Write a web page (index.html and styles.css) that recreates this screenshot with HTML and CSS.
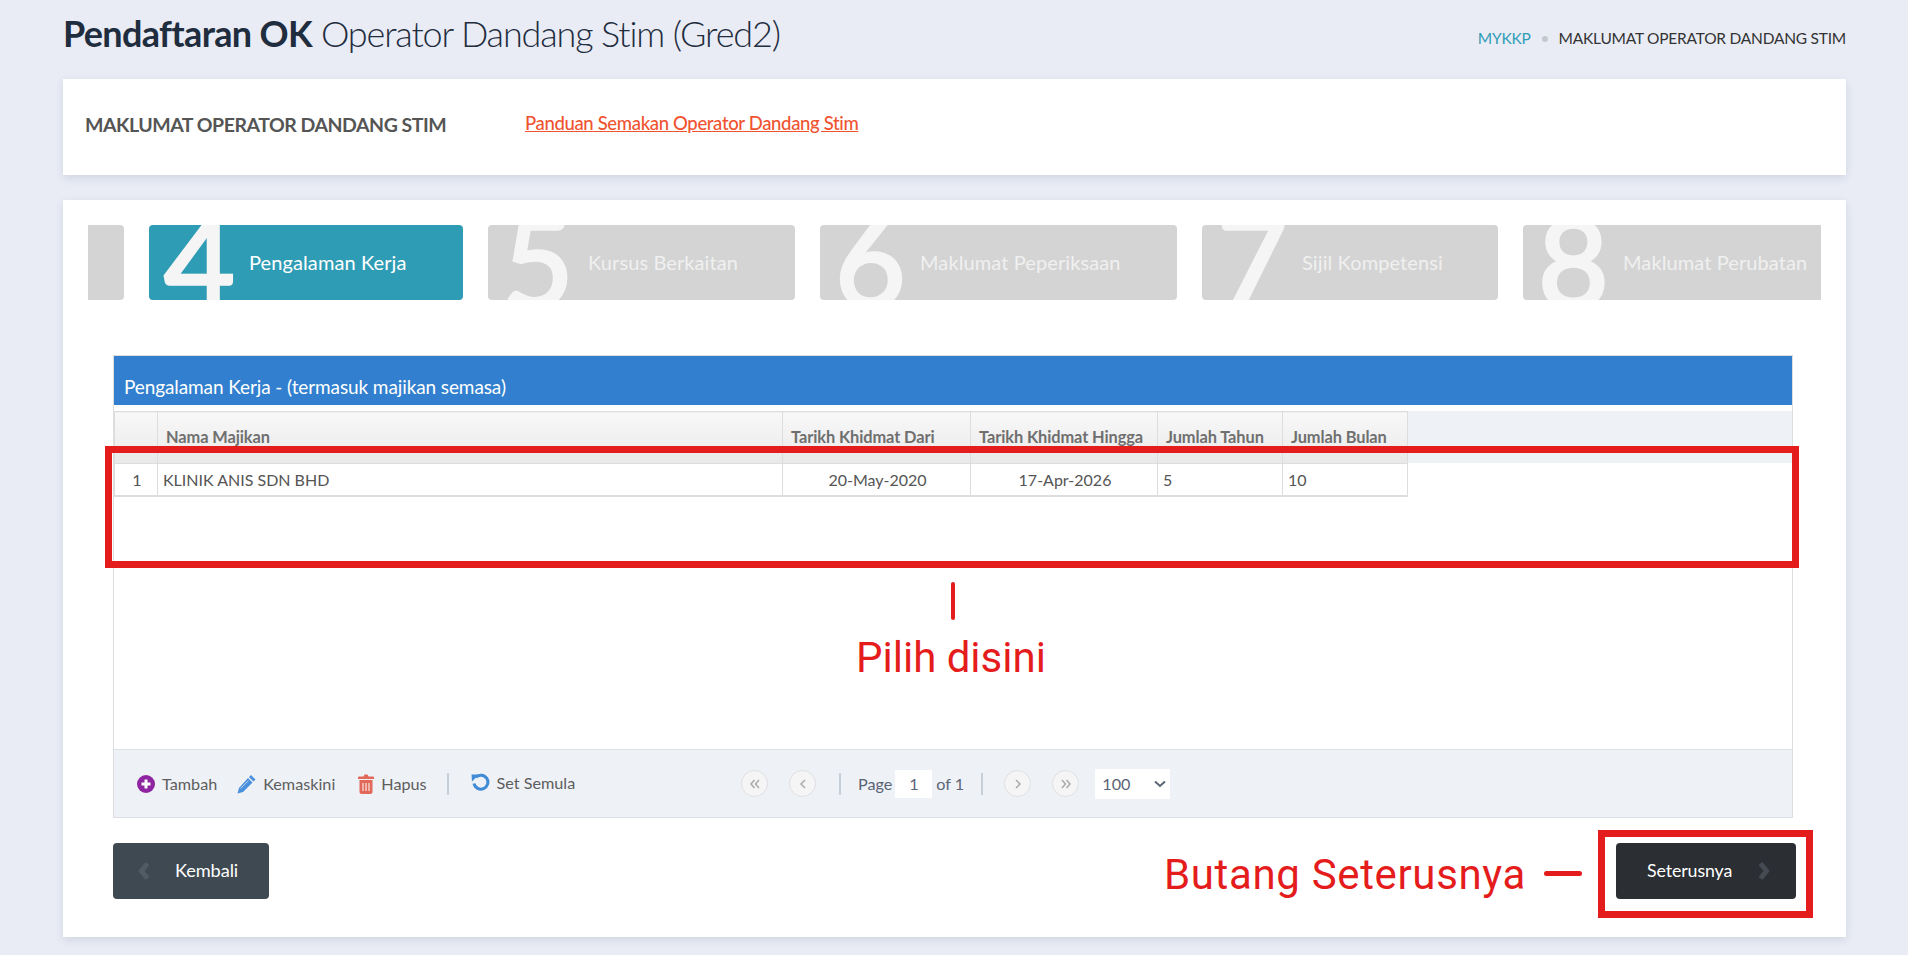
FILE: index.html
```html
<!DOCTYPE html>
<html lang="ms">
<head>
<meta charset="utf-8">
<title>Pendaftaran OK</title>
<link rel="stylesheet" href="styles.css">
</head>
<body>
<header class="topbar">
  <h1 class="title"><b>Pendaftaran OK</b> <span>Operator Dandang Stim (Gred2)</span></h1>
  <nav class="crumbs"><a>MYKKP</a><i class="dot"></i><span>MAKLUMAT OPERATOR DANDANG STIM</span></nav>
</header>

<section class="card info">
  <h2>MAKLUMAT OPERATOR DANDANG STIM</h2>
  <a class="guide">Panduan Semakan Operator Dandang Stim</a>
</section>

<section class="card main">
  <div class="steps">
    <div class="step stub"></div>
    <div class="step active s4"><span class="num">4</span><span class="lbl">Pengalaman Kerja</span></div>
    <div class="step s5"><span class="num">5</span><span class="lbl">Kursus Berkaitan</span></div>
    <div class="step s6"><span class="num">6</span><span class="lbl">Maklumat Peperiksaan</span></div>
    <div class="step s7"><span class="num">7</span><span class="lbl">Sijil Kompetensi</span></div>
    <div class="step s8"><span class="num">8</span><span class="lbl">Maklumat Perubatan</span></div>
  </div>

  <div class="panel">
    <div class="caption">Pengalaman Kerja - (termasuk majikan semasa)</div>
    <div class="grid-body">
      <table class="grid">
        <thead>
          <tr><th class="c0"></th><th class="c1">Nama Majikan</th><th class="c2">Tarikh Khidmat Dari</th><th class="c3">Tarikh Khidmat Hingga</th><th class="c4">Jumlah Tahun</th><th class="c5">Jumlah Bulan</th></tr>
        </thead>
        <tbody>
          <tr><td class="idx">1</td><td>KLINIK ANIS SDN BHD</td><td class="mid">20-May-2020</td><td class="mid">17-Apr-2026</td><td>5</td><td>10</td></tr>
        </tbody>
      </table>
    </div>
    <div class="pager">
      <div class="actions">
        <span class="act a1"><svg viewBox="0 0 18 18" width="18" height="18"><circle cx="9" cy="9" r="9" fill="#8e24a0"/><path d="M9 4.500v9M4.500 9h9" stroke="#fff" stroke-width="3"/></svg>Tambah</span>
        <span class="act a2"><svg viewBox="0 0 19 20" width="19" height="20"><path d="M14 1l4.500 4.500-2 2L12 3zM11 4l4.500 4.500L6 18l-5.500 1.500L2 14z" fill="#4a8fdb"/><path d="M3.500 14.500l8-8" stroke="#fff" stroke-width="1" opacity=".6"/></svg>Kemaskini</span>
        <span class="act a3"><svg viewBox="0 0 16 20" width="16" height="20"><path d="M5.500 2.500 6.500.5h3l1 2H15a1 1 0 0 1 1 1V5H0V3.500a1 1 0 0 1 1-1zM1.500 6h13v12a2 2 0 0 1-2 2h-9a2 2 0 0 1-2-2z" fill="#e2695a"/><path d="M5 9v8M8 9v8M11 9v8" stroke="#fff" stroke-width="1"/></svg>Hapus</span>
        <i class="sep"></i>
        <span class="act a4"><svg viewBox="0 0 19 19" width="19" height="19"><path d="M4.800 4.300A7 7 0 1 1 3 10.500" fill="none" stroke="#3f8bd6" stroke-width="3"/><path d="M0.500 1.500 8 1.500 1 8.500z" fill="#3f8bd6"/></svg>Set Semula</span>
      </div>
      <div class="nav">
        <button class="pg" aria-label="first"><svg viewBox="0 0 12 10" width="12" height="10"><path d="M5.500 1 2 5l3.500 4M10 1 6.500 5 10 9" fill="none" stroke="#aaa" stroke-width="1.500"/></svg></button>
        <button class="pg" aria-label="prev"><svg viewBox="0 0 8 10" width="8" height="10"><path d="M6 1 2 5l4 4" fill="none" stroke="#aaa" stroke-width="1.500"/></svg></button>
        <i class="sep"></i>
        <span class="pg-text">Page</span><span class="pg-input">1</span><span class="pg-text">of 1</span>
        <i class="sep"></i>
        <button class="pg" aria-label="next"><svg viewBox="0 0 8 10" width="8" height="10"><path d="M2 1l4 4-4 4" fill="none" stroke="#aaa" stroke-width="1.500"/></svg></button>
        <button class="pg" aria-label="last"><svg viewBox="0 0 12 10" width="12" height="10"><path d="M2 1l3.500 4L2 9M6.500 1 10 5 6.500 9" fill="none" stroke="#aaa" stroke-width="1.500"/></svg></button>
        <span class="pg-select">100<svg viewBox="0 0 12 8" width="12" height="8"><path d="M1 1.500 6 6l5-4.500" fill="none" stroke="#5b6475" stroke-width="2"/></svg></span>
      </div>
    </div>
  </div>

  <div class="buttons">
    <button class="btn back"><svg viewBox="0 0 12 20" width="12" height="20"><path d="M9.500 2.500 3.500 10l6 7.500" fill="none" stroke="#515b66" stroke-width="5"/></svg><span>Kembali</span></button>
    <button class="btn next"><span>Seterusnya</span><svg viewBox="0 0 12 20" width="12" height="20"><path d="M2.500 2.500l6 7.500-6 7.500" fill="none" stroke="#464a53" stroke-width="5"/></svg></button>
  </div>
</section>

<div class="mark box-table"></div>
<div class="mark line-v"></div>
<div class="mark note note-pilih">Pilih disini</div>
<div class="mark note note-butang">Butang Seterusnya</div>
<div class="mark line-h"></div>
<div class="mark box-next"></div>
</body>
</html>
```
FILE: styles.css
```css
* { box-sizing: border-box; }
html, body { margin: 0; height: 955px; overflow: hidden; }
body { background: #e9ecf5; font-family: Lato, "Liberation Sans", sans-serif; color: #555; position: relative; padding: 0 62px 0 63px; }

.topbar { height: 79px; display: flex; justify-content: space-between; align-items: flex-start; }
.title { margin: 11px 0 0; font-size: 36px; line-height: 44px; font-weight: 300; color: #1f2d3f; white-space: nowrap; letter-spacing: -1px; }
.title b { font-weight: 700; letter-spacing: -0.65px; }
.title span { font-weight: 300; letter-spacing: -1.15px; }
.crumbs { display: flex; align-items: center; margin: 28px 0 0; font-size: 15.500px; line-height: 20px; letter-spacing: -0.23px; color: #333; }
.crumbs a { color: #2f9cb5; }
.dot { width: 6px; height: 6px; border-radius: 50%; background: #c4c8cf; margin: 2px 11px 0 11px; }

.card { background: #fff; box-shadow: 0 3px 8px rgba(70, 80, 120, .14); }
.info { height: 96px; display: flex; align-items: center; padding: 0 22px; }
.info h2 { margin: 0; width: 440px; font-size: 19.500px; line-height: 24px; font-weight: 700; color: #555; letter-spacing: -0.47px; position: relative; top: -2px; }
.guide { font-size: 18.500px; line-height: 24px; font-weight: 500; color: #f0532f; text-decoration: underline; letter-spacing: -0.35px; position: relative; top: -4px; }

.main { margin-top: 25px; height: 737px; padding: 25px 25px 0; }

.steps { display: flex; gap: 25px; height: 75px; overflow: hidden; }
.step { height: 75px; background: #d4d4d4; border-radius: 4px; display: flex; align-items: center; overflow: hidden; flex: none; }
.stub { width: 36px; border-radius: 0 4px 4px 0; }
.s4 { width: 314px; }
.s5 { width: 307px; }
.s6 { width: 357px; }
.s7 { width: 296px; }
.s8 { width: 298px; border-radius: 4px 0 0 4px; }
.active { background: #2f9cb5; }
.num { width: 100px; flex: none; padding: 0 0 4px 15px; font-size: 122px; line-height: 75px; font-weight: 400; color: #f5f5f5; -webkit-text-stroke: 3.500px #f5f5f5; letter-spacing: -2px; }
.lbl { font-size: 20px; line-height: 24px; color: #f0f0f0; white-space: nowrap; letter-spacing: 0.1px; position: relative; top: -1px; }
.active .lbl { color: #fff; }

.panel { margin: 55px 0 0 25px; width: 1680px; border-top: 1px solid #ddd; border-left: 1px solid #ddd; border-right: 1px solid #ddd; }
.caption { height: 49px; background: #317fce; color: #fff; font-size: 19px; line-height: 24px; padding: 19px 0 0 10px; letter-spacing: -0.1px; }
.grid-body { height: 344px; padding-top: 6px; background: linear-gradient(#eef1f6 0 52px, #fff 52px); background-origin: content-box; background-repeat: no-repeat; }
.grid { border-collapse: collapse; table-layout: fixed; width: 1293px; font-size: 16px; color: #555; }
.grid th { height: 52px; background: linear-gradient(#f8f8f8, #e9e9e9); border: 1px solid #ddd; text-align: left; font-weight: 700; color: #6f6f6f; padding: 0 0 3px 8px; letter-spacing: -0.1px; white-space: nowrap; font-size: 16.400px; }
.grid td { height: 32px; border: 1px solid #ddd; border-bottom-width: 2px; padding: 0 0 0 5px; white-space: nowrap; }
.c0 { width: 43px; }
.c1 { width: 625px; }
.c2 { width: 188px; }
.c3 { width: 187px; }
.c4 { width: 125px; }
.c5 { width: 125px; }
.grid td.idx { text-align: center; padding: 0 0 0 2px; }
.grid td.mid { text-align: center; padding: 0 0 0 2px; }

.pager { height: 69px; background: #eef1f6; border-top: 1px solid #dcdfe5; border-bottom: 1px solid #dcdfe5; display: flex; align-items: center; padding-left: 23px; font-size: 16.200px; color: #5d5d5d; }
.actions { width: 604px; display: flex; align-items: center; flex: none; }
.act { display: flex; align-items: center; gap: 7px; }
.a2 { margin-left: 20px; }
.a3 { margin-left: 23px; }
.a4 { margin-left: 22px; position: relative; top: -1px; }
.sep { width: 2px; height: 22px; background: #c6cfd8; margin-left: 20px; flex: none; }
.nav { display: flex; align-items: center; color: #5b6475; }
.pg { width: 27px; height: 27px; border-radius: 50%; border: 1px solid #dfdfe3; background: #f5f5f5; padding: 0; display: flex; align-items: center; justify-content: center; margin-right: 21px; }
.pg + .sep { margin-left: 2px; margin-right: 17px; }
.pg-text { line-height: 28px; }
.pg-input { width: 37px; height: 28px; line-height: 28px; background: #fff; text-align: center; margin: 0 4px 0 3px; }
.pg-text + .sep { margin-left: 17px; margin-right: 21px; }
.pg-select { width: 75px; height: 30px; background: #fff; display: flex; align-items: center; justify-content: space-between; padding: 0 4px 0 7px; margin-left: -5px; }

.buttons { margin: 25px 25px 0 25px; display: flex; justify-content: space-between; }
.btn { height: 56px; border: 0; border-radius: 4px; display: flex; align-items: center; color: #fff; font: 400 17.800px/24px Lato, sans-serif; padding: 0; letter-spacing: -0.1px; }
.back { width: 156px; background: #3e4952; padding-left: 25px; }
.back span { margin-left: 25px; font-size: 18.200px; position: relative; top: -1px; }
.next { width: 180px; background: #2b2e33; padding-left: 31px; }
.next span { position: relative; top: -1px; }
.next svg { margin-left: 26px; }

.mark { position: absolute; }
.box-table { left: 105px; top: 446px; width: 1694px; height: 122px; border: 7px solid #e51c1c; }
.box-next { left: 1598px; top: 830px; width: 215px; height: 88px; border: 7px solid #e51c1c; }
.line-v { left: 951px; top: 582px; width: 4px; height: 38px; background: #e51c1c; border-radius: 2px; }
.line-h { left: 1544px; top: 871px; width: 38px; height: 5px; background: #e51c1c; border-radius: 3px; }
.note { font-family: Roboto, sans-serif; font-size: 42px; line-height: 48px; color: #e51c1c; white-space: nowrap; }
.note-pilih { left: 856px; top: 634px; }
.note-butang { left: 1164px; top: 851px; letter-spacing: 0.65px; }
```
